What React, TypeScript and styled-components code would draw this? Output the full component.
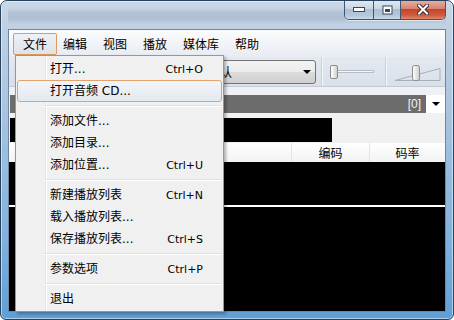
import React from 'react';
import styled, { createGlobalStyle, css } from 'styled-components';

const GlobalStyle = createGlobalStyle`
  html, body {
    margin: 0;
    padding: 0;
    width: 454px;
    height: 320px;
    overflow: hidden;
    background: #ffffff;
  }
  body {
    font-family: "DejaVu Sans", "Noto Sans CJK SC", sans-serif;
    font-size: 12px;
    color: #000;
  }
`;

const Window = styled.div`
  position: relative;
  box-sizing: border-box;
  width: 454px;
  height: 320px;
  border: 1px solid #27435f;
  border-radius: 7px 7px 6px 6px;
  background: linear-gradient(180deg, #c9d7e6 0px, #bfd0e2 28px, #a6c3df 120px, #82b3de 230px, #5e9fd6 320px);
  box-shadow: inset 0 0 0 1px rgba(255, 255, 255, 0.5);
  display: flex;
  flex-direction: column;
  padding: 0 7px 7px;
  overflow: hidden;
`;

const TitleBar = styled.div`
  height: 28px;
  display: flex;
  justify-content: flex-end;
  align-items: flex-start;
  background: linear-gradient(180deg, transparent 7px, rgba(125, 145, 170, 0.28) 12px, rgba(125, 145, 170, 0.28) 18px, transparent 23px);
`;

const Captions = styled.div`
  display: flex;
  height: 19px;
  margin-top: -1px;
  border: 1px solid #3d5674;
  border-top: none;
  border-radius: 0 0 5px 5px;
  overflow: hidden;
  box-shadow: 0 1px 0 rgba(255, 255, 255, 0.55);
`;

const CapButton = styled.div<{ $w: number; $close?: boolean }>`
  width: ${p => p.$w}px;
  display: flex;
  align-items: center;
  justify-content: center;
  background: ${p =>
    p.$close
      ? 'linear-gradient(180deg, #e9b1a3 0%, #d98470 45%, #c5442c 50%, #cf5a3e 80%, #e08a68 100%)'
      : 'linear-gradient(180deg, #e2eaf3 0%, #c9d6e4 45%, #aebfd3 50%, #b4c6da 80%, #cbdaea 100%)'};
  & + & {
    border-left: 1px solid #3d5674;
  }
`;

const Client = styled.div`
  position: relative;
  flex: 1;
  min-height: 0;
  border: 1px solid #6f86a2;
  background: #f0f0f0;
  display: flex;
  flex-direction: column;
  overflow: hidden;
`;

const MenuBar = styled.div`
  height: 27px;
  display: flex;
  align-items: center;
  padding-left: 6px;
  background: linear-gradient(180deg, #fbfcfd, #e7ecf2);
  font-family: "Noto Sans CJK SC", sans-serif;
  font-size: 12px;
`;

const MenuTitle = styled.div<{ $open?: boolean }>`
  height: 22px;
  line-height: 20px;
  box-sizing: border-box;
  padding: 0 7px;
  border: 1px solid transparent;
  border-radius: 2px;
  ${p =>
    p.$open &&
    css`
      margin: 0 -2px;
      padding: 0 9px;
      border-color: #e29a5c;
      background: linear-gradient(180deg, #eef1f5, #dde3ea);
    `}
`;

const ToolBar = styled.div`
  height: 29px;
  border-bottom: 1px solid #c3cbd7;
  background: linear-gradient(180deg, #e4e9f0, #d9e0ea);
  display: flex;
  justify-content: flex-end;
  align-items: stretch;
`;

const Combo = styled.div`
  align-self: center;
  box-sizing: border-box;
  width: 116px;
  height: 24px;
  margin-right: 5px;
  border: 1px solid #737373;
  border-radius: 3px;
  background: linear-gradient(180deg, #f3f3f3 0%, #ebebeb 50%, #dcdcdc 50%, #cfcfcf 100%);
  display: flex;
  align-items: center;
  padding: 0 4px 0 7px;
  font-family: "Noto Sans CJK SC", sans-serif;
  font-size: 12px;
`;

const DownArrow = styled.span<{ $color?: string }>`
  margin-left: auto;
  width: 0;
  height: 0;
  border-left: 4px solid transparent;
  border-right: 4px solid transparent;
  border-top: 4px solid ${p => p.$color ?? '#000'};
`;

const ToolSep = styled.div`
  width: 0;
  border-left: 1px solid #c8cfda;
  border-right: 1px solid #f4f6f9;
`;

const SliderZone = styled.div`
  width: 62px;
  box-sizing: border-box;
  padding-left: 7px;
  display: flex;
  align-items: center;
`;

const Thumb = styled.div`
  width: 8px;
  height: 14px;
  box-sizing: border-box;
  border: 1px solid #8b8b8b;
  border-radius: 2px;
  background: linear-gradient(90deg, #ffffff, #e6e6e6 60%, #cfcfcf);
`;

const Track = styled.div`
  width: 36px;
  height: 3px;
  box-sizing: border-box;
  border: 1px solid #b7bcc4;
  border-left: none;
  background: #f6f7f9;
`;

const VolumeZone = styled.div`
  width: 58px;
  display: flex;
`;

const FilterRow = styled.div`
  height: 30px;
  box-sizing: border-box;
  padding: 8px 0 0 1px;
  display: flex;
  align-items: flex-start;
  background: #eff1f4;
`;

const FilterField = styled.div`
  flex: 1;
  height: 18px;
  background: #6c6c6c;
  color: #f4f4f4;
  display: flex;
  align-items: center;
  justify-content: flex-end;
  padding-right: 5px;
  font-family: "Liberation Sans", sans-serif;
  font-size: 12px;
`;

const FilterDrop = styled.div`
  width: 19px;
  height: 18px;
  background: #ffffff;
  display: flex;
  align-items: center;
  justify-content: center;
  & > span {
    margin-left: 0;
  }
`;

const InfoRow = styled.div`
  height: 26px;
  box-sizing: border-box;
  padding: 1px 0 1px 1px;
  display: flex;
`;

const InfoBlock = styled.div`
  width: 322px;
  background: #000000;
`;

const Header = styled.div`
  height: 19px;
  display: flex;
  background: linear-gradient(180deg, #ffffff, #f2f3f5);
  font-family: "Noto Sans CJK SC", sans-serif;
  font-size: 12px;
`;

const HeadCell = styled.div<{ $w?: number }>`
  ${p => (p.$w ? `width: ${p.$w}px;` : 'flex: 1;')}
  display: flex;
  align-items: center;
  justify-content: center;
  line-height: 19px;
  & + & {
    border-left: 1px solid #e1e4e8;
  }
`;

const ListBody = styled.div`
  flex: 1;
  background: #000000;
  padding-top: 43px;
`;

const ListLine = styled.div`
  height: 2px;
  background: #ffffff;
`;

const DropMenu = styled.div`
  position: absolute;
  left: 14px;
  top: 54px;
  width: 209px;
  box-sizing: border-box;
  border: 1px solid #979797;
  padding: 2px 1px 1px;
  background:
    linear-gradient(90deg, transparent 29px, #e2e3e3 29px, #e2e3e3 30px, #ffffff 30px, #ffffff 31px, transparent 31px),
    #f0f0f0;
  box-shadow: 2px 2px 3px rgba(0, 0, 0, 0.3);
  font-size: 12px;
`;

const MenuItem = styled.div<{ $hot?: boolean }>`
  height: 22px;
  box-sizing: border-box;
  display: flex;
  align-items: center;
  padding: 0 18px 0 32px;
  border: 1px solid transparent;
  border-radius: 3px;
  ${p =>
    p.$hot &&
    css`
      border-color: #e4a26a;
      background: linear-gradient(180deg, #f2f5f9, #e3e9f0);
    `}
`;

const Label = styled.span`
  font-family: "DejaVu Sans", "Noto Sans CJK SC", sans-serif;
  font-size: 12px;
  line-height: 20px;
`;

const Shortcut = styled.span`
  margin-left: auto;
  font-family: "DejaVu Sans", sans-serif;
  font-size: 11px;
`;

const MenuSep = styled.div`
  height: 8px;
  margin-left: 28px;
  display: flex;
  flex-direction: column;
  justify-content: center;
  &::before {
    content: '';
    height: 1px;
    background: #e0e0e0;
  }
  &::after {
    content: '';
    height: 1px;
    background: #ffffff;
  }
`;

type Entry = { label: string; key?: string; hot?: boolean } | 'sep';

const fileMenu: Entry[] = [
  { label: '打开...', key: 'Ctrl+O' },
  { label: '打开音频 CD...', hot: true },
  'sep',
  { label: '添加文件...' },
  { label: '添加目录...' },
  { label: '添加位置...', key: 'Ctrl+U' },
  'sep',
  { label: '新建播放列表', key: 'Ctrl+N' },
  { label: '载入播放列表...' },
  { label: '保存播放列表...', key: 'Ctrl+S' },
  'sep',
  { label: '参数选项', key: 'Ctrl+P' },
  'sep',
  { label: '退出' },
];

const menus = ['文件', '编辑', '视图', '播放', '媒体库', '帮助'];

const MinIcon = () => (
  <svg width="12" height="5" viewBox="0 0 12 5">
    <rect x="0.5" y="0.5" width="11" height="4" fill="#fff" stroke="#34495f" />
  </svg>
);

const MaxIcon = () => (
  <svg width="11" height="10" viewBox="0 0 11 10">
    <rect x="0.5" y="0.5" width="10" height="9" fill="#34495f" />
    <rect x="1.5" y="1.5" width="8" height="7" fill="#fff" />
    <rect x="3" y="4" width="5" height="3" fill="#34495f" />
  </svg>
);

const CloseIcon = () => (
  <svg width="12" height="11" viewBox="0 0 12 11">
    <path d="M2 1.5 L10 9.5 M10 1.5 L2 9.5" stroke="#3a2b2b" strokeWidth="4" strokeLinecap="square" />
    <path d="M2 1.5 L10 9.5 M10 1.5 L2 9.5" stroke="#fff" strokeWidth="2" strokeLinecap="square" />
  </svg>
);

const Volume = () => (
  <svg width="58" height="29" viewBox="0 0 58 29">
    <defs>
      <linearGradient id="vthumb" x1="0" x2="1" y1="0" y2="0">
        <stop offset="0" stopColor="#ffffff" />
        <stop offset="1" stopColor="#cdcdcd" />
      </linearGradient>
    </defs>
    <path d="M8 23.5 L53 11.5 L53 23.5 Z" fill="none" stroke="#a9afb8" strokeWidth="1" />
    <rect x="25.5" y="8.5" width="7" height="15" rx="2" fill="url(#vthumb)" stroke="#8b8b8b" />
  </svg>
);

export default function App() {
  return (
    <>
      <GlobalStyle />
      <Window>
        <TitleBar>
          <Captions>
            <CapButton $w={28}>
              <MinIcon />
            </CapButton>
            <CapButton $w={26}>
              <MaxIcon />
            </CapButton>
            <CapButton $w={44} $close>
              <CloseIcon />
            </CapButton>
          </Captions>
        </TitleBar>
        <Client>
          <MenuBar>
            {menus.map((m, i) => (
              <MenuTitle key={m} $open={i === 0}>
                {m}
              </MenuTitle>
            ))}
          </MenuBar>
          <ToolBar>
            <Combo>
              默认
              <DownArrow />
            </Combo>
            <ToolSep />
            <SliderZone>
              <Thumb />
              <Track />
            </SliderZone>
            <ToolSep />
            <VolumeZone>
              <Volume />
            </VolumeZone>
          </ToolBar>
          <FilterRow>
            <FilterField>[0]</FilterField>
            <FilterDrop>
              <DownArrow />
            </FilterDrop>
          </FilterRow>
          <InfoRow>
            <InfoBlock />
          </InfoRow>
          <Header>
            <HeadCell>标题</HeadCell>
            <HeadCell $w={77}>编码</HeadCell>
            <HeadCell $w={75}>码率</HeadCell>
          </Header>
          <ListBody>
            <ListLine />
          </ListBody>
        </Client>
        <DropMenu>
          {fileMenu.map((e, i) =>
            e === 'sep' ? (
              <MenuSep key={i} />
            ) : (
              <MenuItem key={i} $hot={e.hot}>
                <Label>{e.label}</Label>
                {e.key && <Shortcut>{e.key}</Shortcut>}
              </MenuItem>
            ),
          )}
        </DropMenu>
      </Window>
    </>
  );
}
